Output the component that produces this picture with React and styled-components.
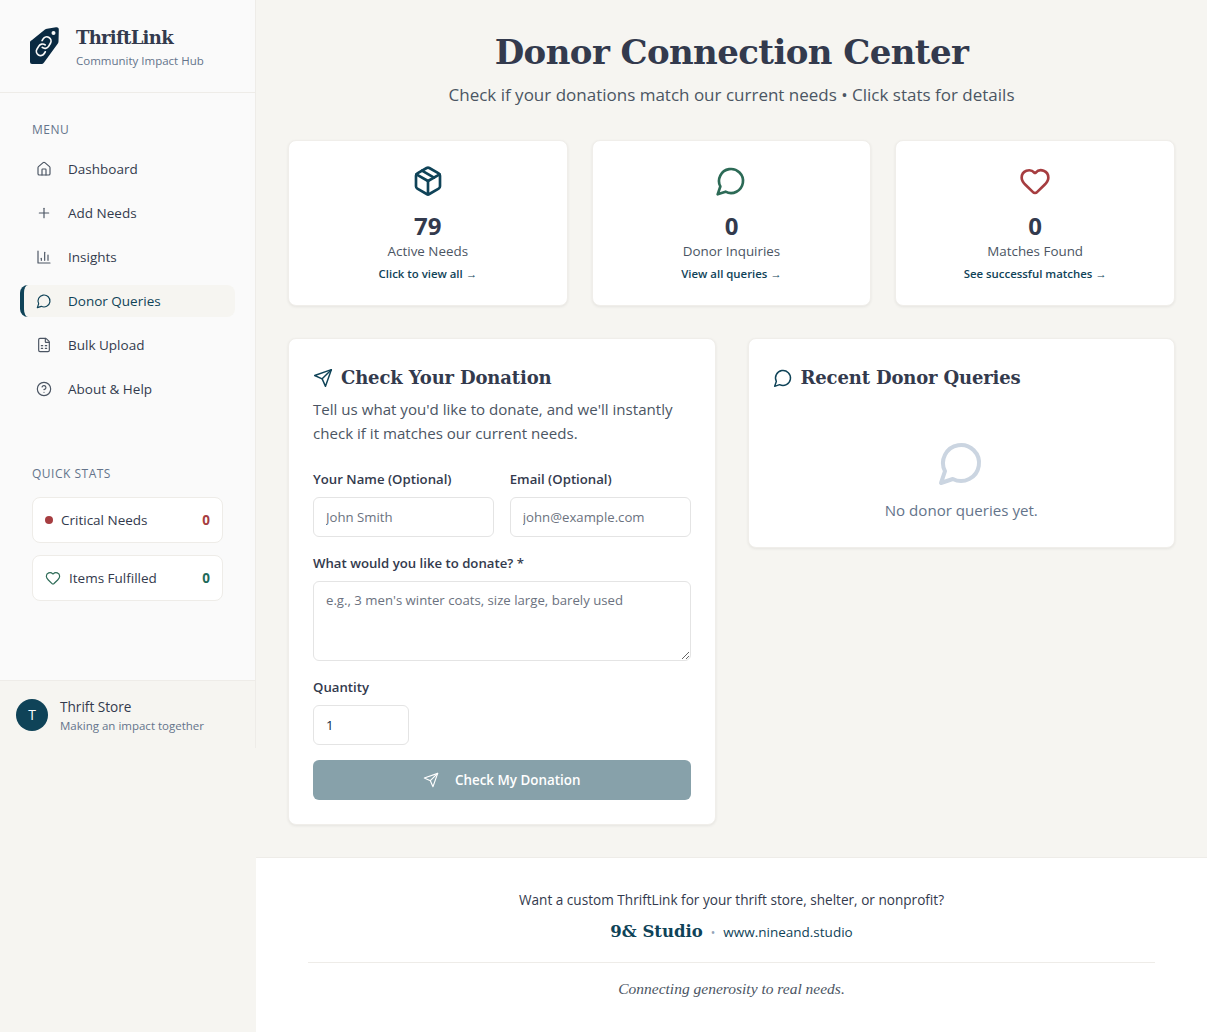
import styled, { createGlobalStyle } from 'styled-components';
import { Home, Plus, FileSpreadsheet, HelpCircle, Heart, Package } from 'lucide-react';

const GlobalStyle = createGlobalStyle`
  * { box-sizing: border-box; }
  html, body { margin: 0; padding: 0; }
  body {
    background: #f6f5f1;
    font-family: "Open Sans", "Noto Sans", sans-serif;
    color: #333a4d;
  }
`;

// older lucide outlines, the installed package has redrawn these
function LineIcon({ size = 24, strokeWidth = 2, color = 'currentColor', children }) {
  return (
    <svg
      width={size}
      height={size}
      viewBox="0 0 24 24"
      fill="none"
      stroke={color}
      strokeWidth={strokeWidth}
      strokeLinecap="round"
      strokeLinejoin="round"
    >
      {children}
    </svg>
  );
}

const ChatIcon = (props) => (
  <LineIcon {...props}>
    <path d="M7.9 20A9 9 0 1 0 4 16.1L2 22Z" />
  </LineIcon>
);

const SendIcon = (props) => (
  <LineIcon {...props}>
    <path d="m22 2-7 20-4-9-9-4Z" />
    <path d="M22 2 11 13" />
  </LineIcon>
);

const ChartIcon = (props) => (
  <LineIcon {...props}>
    <path d="M3 3v18h18" />
    <path d="M18 17V9" />
    <path d="M13 17V5" />
    <path d="M8 17v-3" />
  </LineIcon>
);

const navItems = [
  { label: 'Dashboard', icon: Home },
  { label: 'Add Needs', icon: Plus },
  { label: 'Insights', icon: ChartIcon },
  { label: 'Donor Queries', icon: ChatIcon, active: true },
  { label: 'Bulk Upload', icon: FileSpreadsheet },
  { label: 'About & Help', icon: HelpCircle },
];

const stats = [
  { value: 79, label: 'Active Needs', link: 'Click to view all →', icon: Package, color: '#0f4358' },
  { value: 0, label: 'Donor Inquiries', link: 'View all queries →', icon: ChatIcon, color: '#2c6a56' },
  { value: 0, label: 'Matches Found', link: 'See successful matches →', icon: Heart, color: '#a63d40' },
];

function TagLogo() {
  return (
    <svg width="32" height="38" viewBox="0 0 32 38">
      <path
        d="M3 13 L16 2.5 Q17 2 18 1.8 L27 .3 Q30 0 29.8 3 L29.5 14.5 Q29.4 16 28.5 17 L15 35.5 Q14 37 12.5 37 L3 37 Q1 37 1 35 L1 15 Q1 14 3 13Z"
        fill="#0a2a42"
      />
      <circle cx="24.5" cy="6" r="2" fill="#fafafa" />
      <g fill="none" stroke="#fafafa" strokeWidth="2" strokeLinecap="round" transform="translate(4.5 9) scale(.85) rotate(-14 12 12)">
        <path d="M10 13a5 5 0 0 0 7.54.54l3-3a5 5 0 0 0-7.07-7.07l-1.72 1.71" />
        <path d="M14 11a5 5 0 0 0-7.54-.54l-3 3a5 5 0 0 0 7.07 7.07l1.71-1.71" />
      </g>
    </svg>
  );
}

function App() {
  return (
    <>
      <GlobalStyle />
      <Page>
        <Sidebar>
          <Brand>
            <TagLogo />
            <div>
              <BrandName>ThriftLink</BrandName>
              <BrandSub>Community Impact Hub</BrandSub>
            </div>
          </Brand>
          <SideBody>
            <SectionLabel>MENU</SectionLabel>
            <Nav>
              {navItems.map((item) => (
                <NavItem key={item.label} $active={item.active}>
                  <item.icon size={16} strokeWidth={1.75} />
                  {item.label}
                </NavItem>
              ))}
            </Nav>
            <QuickLabel>QUICK STATS</QuickLabel>
            <QuickCard>
              <QuickName>
                <Dot />
                Critical Needs
              </QuickName>
              <QuickValue $color="#a63d40">0</QuickValue>
            </QuickCard>
            <QuickCard>
              <QuickName>
                <Heart size={16} strokeWidth={1.75} color="#2c6a56" />
                Items Fulfilled
              </QuickName>
              <QuickValue $color="#1f6a5a">0</QuickValue>
            </QuickCard>
          </SideBody>
          <UserBar>
            <Avatar>T</Avatar>
            <UserText>
              <UserName>Thrift Store</UserName>
              <UserSub>Making an impact together</UserSub>
            </UserText>
          </UserBar>
        </Sidebar>

        <Main>
          <Content>
            <Title>Donor Connection Center</Title>
            <Subtitle>Check if your donations match our current needs • Click stats for details</Subtitle>
            <StatGrid>
              {stats.map((s) => (
                <StatCard key={s.label}>
                  <s.icon size={32} strokeWidth={2} color={s.color} />
                  <StatValue>{s.value}</StatValue>
                  <StatLabel>{s.label}</StatLabel>
                  <StatLink>{s.link}</StatLink>
                </StatCard>
              ))}
            </StatGrid>
            <Columns>
              <Panel>
                <PanelTitle>
                  <SendIcon size={20} strokeWidth={1.75} color="#0f4358" />
                  Check Your Donation
                </PanelTitle>
                <PanelText>
                  Tell us what you'd like to donate, and we'll instantly check if it matches our current needs.
                </PanelText>
                <FieldRow>
                  <Field>
                    <Label>Your Name (Optional)</Label>
                    <Input placeholder="John Smith" />
                  </Field>
                  <Field>
                    <Label>Email (Optional)</Label>
                    <Input placeholder="john@example.com" />
                  </Field>
                </FieldRow>
                <Field>
                  <Label>What would you like to donate? *</Label>
                  <TextArea placeholder="e.g., 3 men's winter coats, size large, barely used" />
                </Field>
                <Field>
                  <Label>Quantity</Label>
                  <QtyInput type="number" defaultValue="1" />
                </Field>
                <SubmitButton type="button" disabled>
                  <SendIcon size={16} strokeWidth={1.75} />
                  Check My Donation
                </SubmitButton>
              </Panel>
              <Panel>
                <PanelTitle>
                  <ChatIcon size={20} strokeWidth={1.75} color="#0f4358" />
                  Recent Donor Queries
                </PanelTitle>
                <Empty>
                  <ChatIcon size={48} strokeWidth={2} color="#cbd5e1" />
                  <EmptyText>No donor queries yet.</EmptyText>
                </Empty>
              </Panel>
            </Columns>
          </Content>
          <Footer>
            <FooterAsk>Want a custom ThriftLink for your thrift store, shelter, or nonprofit?</FooterAsk>
            <FooterBrand>
              <StudioName>9&amp; Studio</StudioName>
              <FooterDot>•</FooterDot>
              <StudioUrl>www.nineand.studio</StudioUrl>
            </FooterBrand>
            <FooterRule />
            <Tagline>Connecting generosity to real needs.</Tagline>
          </Footer>
        </Main>
      </Page>
    </>
  );
}

const Page = styled.div`
  display: flex;
  align-items: flex-start;
  min-height: 1032px;
`;

const Sidebar = styled.aside`
  width: 256px;
  height: 748px;
  flex: none;
  display: flex;
  flex-direction: column;
  background: #fafafa;
  border-right: 1px solid #eeece8;
`;

const Brand = styled.div`
  height: 93px;
  flex: none;
  display: flex;
  align-items: center;
  gap: 15px;
  padding: 0 29px;
  border-bottom: 1px solid #eeece8;

  & > div {
    padding-top: 3px;
  }
`;

const BrandName = styled.div`
  font-family: "DejaVu Serif", "Liberation Serif", serif;
  font-weight: 700;
  font-size: 18px;
  letter-spacing: -0.7px;
  line-height: 26px;
  color: #333a4d;
`;

const BrandSub = styled.div`
  font-size: 11.5px;
  line-height: 20px;
  color: #64748b;
`;

const SideBody = styled.div`
  flex: 1;
  padding: 28px 20px 0;
`;

const SectionLabel = styled.div`
  margin-left: 12px;
  font-size: 12px;
  line-height: 18px;
  font-weight: 500;
  letter-spacing: 0.5px;
  color: #64748b;
`;

const QuickLabel = styled(SectionLabel)`
  margin-top: 60px;
  margin-bottom: 14px;
`;

const Nav = styled.nav`
  display: flex;
  flex-direction: column;
  gap: 12px;
  margin-top: 14px;
`;

const NavItem = styled.div`
  height: 32px;
  width: 215px;
  display: flex;
  align-items: center;
  gap: 16px;
  padding-left: 12px;
  font-size: 13.5px;
  font-weight: 500;
  color: ${(p) => (p.$active ? '#0f4358' : '#333a4d')};
  background: ${(p) => (p.$active ? '#f6f5f1' : 'transparent')};
  border-radius: 8px;
  border-left: 4px solid ${(p) => (p.$active ? '#0f4358' : 'transparent')};

  svg {
    color: ${(p) => (p.$active ? '#0f4358' : '#4b5563')};
  }
`;

const QuickCard = styled.div`
  height: 46px;
  margin: 12px 12px 0;
  display: flex;
  align-items: center;
  justify-content: space-between;
  padding: 0 12px;
  background: #fff;
  border: 1px solid #eeece8;
  border-radius: 8px;
  font-size: 13.5px;
  font-weight: 500;
`;

const QuickName = styled.div`
  display: flex;
  align-items: center;
  gap: 8px;
`;

const Dot = styled.span`
  width: 8px;
  height: 8px;
  border-radius: 50%;
  background: #a63d40;
`;

const QuickValue = styled.span`
  font-weight: 700;
  color: ${(p) => p.$color};
`;

const UserBar = styled.div`
  height: 68px;
  flex: none;
  display: flex;
  align-items: center;
  gap: 12px;
  padding: 0 16px;
  background: #f6f5f1;
  border-top: 1px solid #eeece8;
`;

const Avatar = styled.div`
  width: 32px;
  height: 32px;
  border-radius: 50%;
  display: flex;
  align-items: center;
  justify-content: center;
  background: #0f4358;
  color: #fff;
  font-size: 14px;
  font-weight: 500;
`;

const UserText = styled.div`
  padding-top: 2px;
`;

const UserName = styled.div`
  font-size: 13.6px;
  line-height: 20px;
  font-weight: 500;
`;

const UserSub = styled.div`
  font-size: 11.5px;
  line-height: 18px;
  color: #64748b;
`;

const Main = styled.main`
  flex: 1;
  min-width: 0;
`;

const Content = styled.div`
  padding: 28px 32px 32px;
  text-align: center;
`;

const Title = styled.h1`
  margin: 0;
  font-family: "DejaVu Serif", "Liberation Serif", serif;
  font-weight: 700;
  font-size: 34px;
  letter-spacing: -0.6px;
  line-height: 48px;
  color: #333a4d;
`;

const Subtitle = styled.p`
  margin: 5px 0 0;
  font-size: 17px;
  line-height: 28px;
  color: #4b5563;
`;

const StatGrid = styled.div`
  display: grid;
  grid-template-columns: repeat(3, 1fr);
  gap: 24px;
  margin-top: 31px;
`;

const Card = styled.div`
  background: #fff;
  border: 1px solid #f0eeea;
  border-radius: 8px;
  box-shadow: 0 1px 3px rgba(0, 0, 0, 0.07);
`;

const StatCard = styled(Card)`
  height: 166px;
  padding-top: 24px;
  display: flex;
  flex-direction: column;
  align-items: center;
`;

const StatValue = styled.div`
  margin-top: 15px;
  font-size: 24px;
  line-height: 28px;
  font-weight: 700;
`;

const StatLabel = styled.div`
  margin-top: 1px;
  font-size: 13.4px;
  line-height: 20px;
  color: #4b5563;
`;

const StatLink = styled.div`
  margin-top: 3px;
  font-size: 11.4px;
  line-height: 20px;
  font-weight: 600;
  color: #0f4358;
`;

const Columns = styled.div`
  display: grid;
  grid-template-columns: 1fr 1fr;
  gap: 32px;
  align-items: start;
  margin-top: 32px;
  text-align: left;
`;

const Panel = styled(Card)`
  padding: 24px;
`;

const PanelTitle = styled.h2`
  margin: 0;
  padding-top: 1px;
  display: flex;
  align-items: center;
  gap: 8px;
  font-family: "DejaVu Serif", "Liberation Serif", serif;
  font-weight: 700;
  font-size: 18px;
  letter-spacing: -0.15px;
  line-height: 28px;
  color: #333a4d;
`;

const PanelText = styled.p`
  margin: 5px 0 0;
  font-size: 15.1px;
  line-height: 24px;
  color: #4b5563;
`;

const FieldRow = styled.div`
  display: grid;
  grid-template-columns: 1fr 1fr;
  gap: 16px;
  margin-top: 24px;
`;

const Field = styled.div`
  margin-top: 16px;

  ${FieldRow} & {
    margin-top: 0;
  }
`;

const Label = styled.label`
  display: block;
  margin-bottom: 8px;
  font-size: 13.2px;
  line-height: 20px;
  font-weight: 600;
  color: #333a4d;
`;

const Input = styled.input`
  display: block;
  width: 100%;
  height: 40px;
  padding: 0 12px;
  border: 1px solid #e4e4e4;
  border-radius: 6px;
  background: #fff;
  font-family: inherit;
  font-size: 13.2px;
  color: #0f2a44;
  outline: none;

  &::placeholder {
    color: #6b7280;
  }
`;

const QtyInput = styled(Input)`
  width: 96px;
`;

const TextArea = styled.textarea`
  display: block;
  width: 100%;
  height: 80px;
  padding: 8px 12px;
  border: 1px solid #e4e4e4;
  border-radius: 6px;
  font-family: inherit;
  font-size: 13.2px;
  line-height: 20px;
  outline: none;

  &::placeholder {
    color: #6b7280;
  }
`;

const SubmitButton = styled.button`
  width: 100%;
  height: 40px;
  margin-top: 15px;
  display: flex;
  align-items: center;
  justify-content: center;
  gap: 16px;
  border: none;
  border-radius: 6px;
  background: #87a1aa;
  color: #fff;
  font-family: inherit;
  font-size: 13.4px;
  font-weight: 600;
`;

const Empty = styled.div`
  display: flex;
  flex-direction: column;
  align-items: center;
  padding: 47px 0 1px;
`;

const EmptyText = styled.div`
  margin-top: 11px;
  font-size: 15.1px;
  line-height: 24px;
  color: #64748b;
`;

const Footer = styled.footer`
  background: #fff;
  border-top: 1px solid #eeece8;
  padding: 32px 52px 0;
  height: 175px;
  text-align: center;
`;

const FooterAsk = styled.div`
  font-size: 13.6px;
  line-height: 20px;
  font-weight: 500;
`;

const FooterBrand = styled.div`
  display: flex;
  align-items: center;
  justify-content: center;
  gap: 8px;
  margin-top: 8px;
`;

const StudioName = styled.span`
  font-family: "DejaVu Serif", "Liberation Serif", serif;
  font-weight: 700;
  font-size: 16.5px;
  line-height: 28px;
  color: #0f4358;
`;

const FooterDot = styled.span`
  font-size: 12px;
  color: #94a3b8;
`;

const StudioUrl = styled.span`
  font-size: 13.5px;
  font-weight: 500;
  color: #0f4358;
`;

const FooterRule = styled.div`
  height: 1px;
  margin-top: 16px;
  background: #eeece8;
`;

const Tagline = styled.div`
  margin-top: 16px;
  font-family: "Liberation Serif", serif;
  font-style: italic;
  font-size: 15.5px;
  line-height: 20px;
  color: #4b5563;
`;

export default App;
